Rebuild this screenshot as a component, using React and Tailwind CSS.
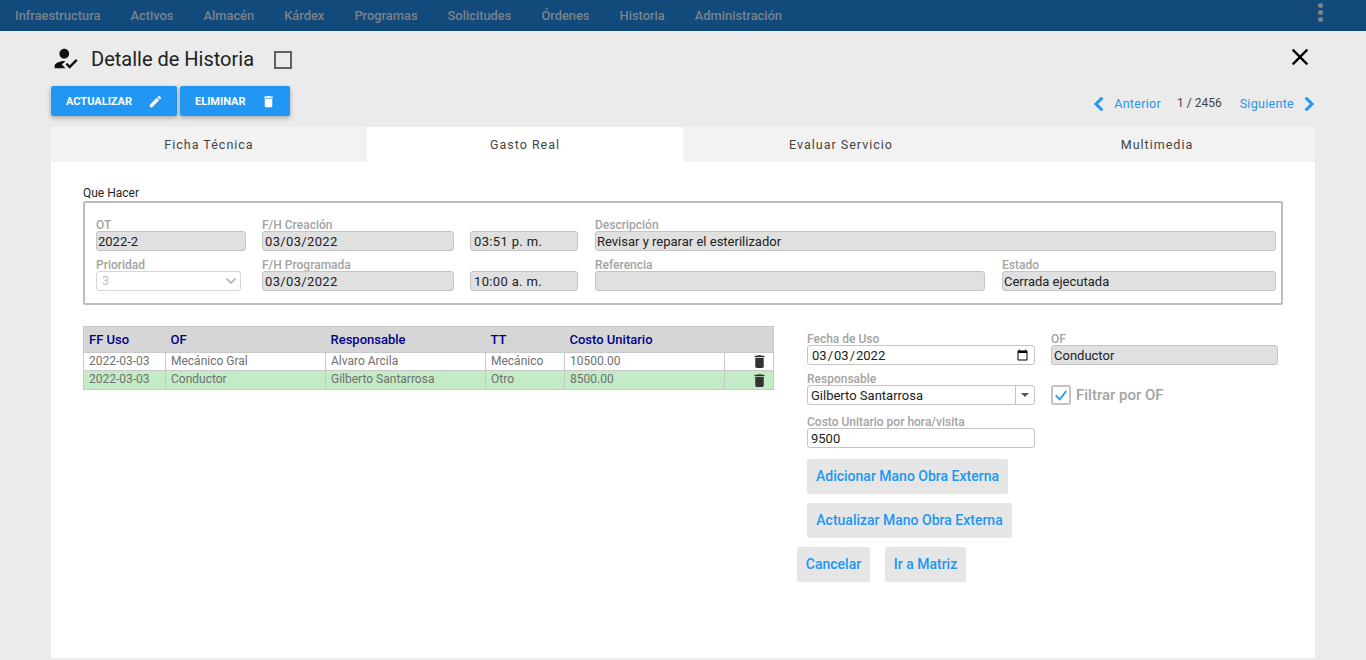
import React from "react";

const Icon = ({ d, className }) => (
  <svg viewBox="0 0 24 24" fill="currentColor" className={className}><path d={d} /></svg>
);
const TRASH = "M6 19c0 1.1.9 2 2 2h8c1.1 0 2-.9 2-2V7H6v12zM19 4h-3.5l-1-1h-5l-1 1H5v2h14V4z";
const EDIT = "M3 17.25V21h3.75L17.81 9.94l-3.75-3.75L3 17.25zM20.71 7.04c.39-.39.39-1.02 0-1.41l-2.34-2.34a.9959.9959 0 0 0-1.41 0l-1.83 1.83 3.75 3.75 1.83-1.83z";
const USER = "M9 17l3-2.94c-.39-.04-.68-.06-1-.06-2.67 0-8 1.34-8 4v2h9l-3-3zm2-5c2.21 0 4-1.79 4-4s-1.79-4-4-4-4 1.79-4 4 1.79 4 4 4m4.47 8.5L12 17l1.4-1.41 2.07 2.08 5.13-5.17 1.4 1.41z";
const CLOSE = "M19 6.41L17.59 5 12 10.59 6.41 5 5 6.41 10.59 12 5 17.59 6.41 19 12 13.41 17.59 19 19 17.59 13.41 12z";
const LEFT = "M15.41 7.41L14 6l-6 6 6 6 1.41-1.41L10.83 12z";
const RIGHT = "M10 6L8.59 7.41 13.17 12l-4.58 4.59L10 18l6-6z";

const nav = ["Infraestructura", "Activos", "Almacén", "Kárdex", "Programas", "Solicitudes", "Órdenes", "Historia", "Administración"];
const tabs = ["Ficha Técnica", "Gasto Real", "Evaluar Servicio", "Multimedia"];

const Field = ({ label, value, className = "", valueClass = "pl-[1px]" }) => (
  <div className={`flex flex-col ${className}`}>
    <span className="text-[12px] leading-[12px] font-medium text-[#a3a3a3] h-[12px]">{label}</span>
    <div className={`h-[20px] rounded-[3px] border border-[#c4c4c4] bg-[#e0e0e0] text-[13px] leading-[19px] text-[#222] whitespace-pre ${valueClass}`}>{value}</div>
  </div>
);

const rows = [
  { c: ["2022-03-03", "Mecánico Gral", "Alvaro Arcila", "Mecánico", "10500.00"], bg: "bg-white h-[18px]", text: "" },
  { c: ["2022-03-03", "Conductor", "Gilberto Santarrosa", "Otro", "8500.00"], bg: "bg-[#c3ebc6] h-[19px]", text: "pb-[1px]" },
];

const Light = ({ children, className = "" }) => (
  <button className={`h-[35px] rounded-[2px] bg-[#e6e6e6] text-[14px] font-medium text-[#2196f3] ${className}`}>{children}</button>
);

export default function App() {
  return (
    <div className="h-[660px] w-[1366px] overflow-hidden bg-[#ebebeb] font-['Roboto',sans-serif]">
      <nav className="flex h-[31px] items-center justify-between bg-[#124a7b] pl-[15px] pr-[43px]">
        <div className="flex gap-[30.1px] text-[12.85px] font-medium text-[#7d8288]">
          {nav.map((n) => <span key={n}>{n}</span>)}
        </div>
        <div className="mb-[7px] flex flex-col gap-[2px]">
          <i className="h-[5px] w-[5px] rounded-full bg-[#7d8288]" />
          <i className="h-[5px] w-[5px] rounded-full bg-[#7d8288]" />
          <i className="h-[5px] w-[5px] rounded-full bg-[#7d8288]" />
        </div>
      </nav>

      <main className="px-[51px]">
        <div className="flex h-[55px] items-center justify-between pt-[1px]">
          <div className="flex items-center">
            <Icon d={USER} className="mb-[2px] h-[29px] w-[29px] text-[#111]" />
            <span className="ml-[11px] text-[20px] text-[#222]">Detalle de Historia</span>
            <span className="ml-[20px] mt-[1px] h-[18px] w-[18px] border-2 border-[#616161]" />
          </div>
          <Icon d={CLOSE} className="mb-[4px] mr-[1px] h-[28px] w-[28px] text-black" />
        </div>

        <div className="flex h-[41px] items-start justify-between">
          <div className="flex gap-[3px]">
            <button className="flex h-[30px] w-[126px] items-center rounded-[2px] bg-[#2196f3] pl-[15px] pt-[2px] text-[11px] font-bold text-white shadow-[0_2px_5px_rgba(0,0,0,0.3)]">
              ACTUALIZAR
              <Icon d={EDIT} className="mb-[2px] ml-[16px] h-[15px] w-[15px]" />
            </button>
            <button className="flex h-[30px] w-[110px] items-center rounded-[2px] bg-[#2196f3] pl-[15px] pt-[2px] text-[11px] font-bold text-white shadow-[0_2px_5px_rgba(0,0,0,0.3)]">
              ELIMINAR
              <Icon d={TRASH} className="mb-[2px] ml-[15px] h-[15px] w-[15px]" />
            </button>
          </div>
          <div className="flex items-center pt-[4px] text-[12.5px] tracking-[0.3px] text-[#2196f3]">
            <Icon d={LEFT} className="mr-[-1px] h-[28px] w-[28px] stroke-current stroke-[0.6]" />
            <span className="ml-[2px]">Anterior</span>
            <span className="mb-[2px] ml-[16px] text-[12px] tracking-normal text-[#444]">1 / 2456</span>
            <span className="ml-[18px]">Siguiente</span>
            <Icon d={RIGHT} className="ml-[1px] mr-[-8px] h-[28px] w-[28px] stroke-current stroke-[0.6]" />
          </div>
        </div>

        <section className="h-[531px] rounded-t-[4px] bg-white">
          <div className="grid h-[35px] grid-cols-4">
            {tabs.map((t, i) => (
              <div key={t} className={`flex items-center justify-center pt-[1px] text-[12.5px] tracking-[1px] text-[#444] ${i === 1 ? "bg-white" : "bg-[#f2f2f2]"}`}>{t}</div>
            ))}
          </div>

          <div className="px-[32px] pt-[25px]">
            <div className="text-[12px] leading-[12px] text-[#222]">Que Hacer</div>
            <fieldset className="mt-[2px] h-[104px] w-[1200px] rounded-[2px] border-2 border-[#bdbdbd] pl-[11px] pr-[5px] pt-[16px]">
              <div className="flex">
                <Field label="OT" value="2022-2" className="w-[150px]" />
                <Field label="F/H Creación" value="03/03/2022" valueClass="pl-[2px] tracking-[0.35px]" className="ml-[16px] w-[192px]" />
                <Field label=" " value="03:51 p. m." valueClass="pl-[3px] tracking-[0.35px]" className="ml-[16px] w-[108px]" />
                <Field label="Descripción" value="Revisar y reparar el esterilizador" className="ml-[17px] w-[681px]" />
              </div>
              <div className="mt-[8px] flex">
                <div className="flex w-[150px] flex-col">
                  <span className="h-[12px] text-[12px] font-medium leading-[12px] text-[#a3a3a3]">Prioridad</span>
                  <div className="flex h-[20px] w-[145px] items-center justify-between rounded-[3px] border border-[#d6d6d6] bg-white pl-[5px] pr-[3px] text-[12.5px] text-[#c4c4c4]">
                    3
                    <svg viewBox="0 0 12 8" className="h-[8px] w-[12px]" fill="none" stroke="#b0b0b0" strokeWidth="1.6"><path d="M1.5 1.5 6 6l4.5-4.5" /></svg>
                  </div>
                </div>
                <Field label="F/H Programada" value="03/03/2022" valueClass="pl-[2px] tracking-[0.35px]" className="ml-[16px] w-[192px]" />
                <Field label=" " value="10:00 a. m." valueClass="pl-[3px] tracking-[0.35px]" className="ml-[16px] w-[108px]" />
                <Field label="Referencia" value="" className="ml-[17px] w-[390px]" />
                <Field label="Estado" value="Cerrada ejecutada" className="ml-[17px] w-[274px]" />
              </div>
            </fieldset>

            <div className="mt-[21px] flex">
              <table className="h-fit w-[691px] shrink-0 table-fixed border-collapse border border-[#c9c9c9] text-[12px]">
                <colgroup>
                  <col className="w-[82px]" /><col className="w-[160px]" /><col className="w-[160px]" /><col className="w-[79px]" /><col className="w-[160px]" /><col />
                </colgroup>
                <thead>
                  <tr className="h-[26px] bg-[#d6d6d6] text-left text-[13px] text-[#00008b]">
                    {["FF Uso", "OF", "Responsable", "TT", "Costo Unitario", ""].map((h, i) => (
                      <th key={i} className="px-[5px] font-medium">{h}</th>
                    ))}
                  </tr>
                </thead>
                <tbody>
                  {rows.map((r) => (
                    <tr key={r.c[1]} className={r.bg}>
                      {r.c.map((c, i) => (
                        <td key={i} className={`border border-[#c9c9c9] px-[5px] py-0 leading-[15px] text-[#707070] ${r.text}`}>{c}</td>
                      ))}
                      <td className="border border-[#c9c9c9] p-0 pl-[26px]">
                        <Icon d={TRASH} className="h-[17px] w-[17px] text-[#333]" />
                      </td>
                    </tr>
                  ))}
                </tbody>
              </table>

              <div className="ml-[33px] w-[476px] pt-[7px]">
                <div className="flex gap-[16px]">
                  <div className="flex w-[228px] flex-col">
                    <span className="h-[12px] text-[12px] font-medium leading-[12px] text-[#a3a3a3]">Fecha de Uso</span>
                    <input type="date" defaultValue="2022-03-03" className="h-[20px] rounded-[3px] border border-[#c4c4c4] bg-white px-[3px] pt-[1px] text-[13px] text-[#222]" />
                  </div>
                  <Field label="OF" value="Conductor" valueClass="pl-[2px]" className="w-[227px]" />
                </div>
                <div className="mt-[8px] flex h-[32px] gap-[16px]">
                  <div className="flex w-[228px] flex-col">
                    <span className="h-[12px] text-[12px] font-medium leading-[12px] text-[#a3a3a3]">Responsable</span>
                    <div className="flex h-[20px] items-center justify-between rounded-[3px] border border-[#c4c4c4] bg-white pl-[3px] text-[13px] text-[#222]">
                      <span className="pt-[1px]">Gilberto Santarrosa</span>
                      <span className="flex h-full w-[19px] items-center justify-center border-l border-[#c4c4c4]">
                        <i className="h-0 w-0 border-x-[4px] border-t-[4px] border-x-transparent border-t-[#555]" />
                      </span>
                    </div>
                  </div>
                  <div className="flex h-[32px] items-center pt-[12px]">
                    <span className="flex h-[20px] w-[20px] items-center justify-center rounded-[2px] border-2 border-[#c4c4c4] bg-white">
                      <svg viewBox="0 0 16 16" className="h-[14px] w-[14px]" fill="none" stroke="#2196f3" strokeWidth="2"><path d="M2 8.5 6.5 13 14 3.5" /></svg>
                    </span>
                    <span className="ml-[5px] text-[15px] font-medium text-[#a3a3a3]">Filtrar por OF</span>
                  </div>
                </div>
                <div className="mt-[11px] flex w-[228px] flex-col">
                  <span className="h-[12px] text-[12px] font-medium leading-[12px] text-[#a3a3a3]">Costo Unitario por hora/visita</span>
                  <div className="h-[20px] rounded-[3px] border border-[#c4c4c4] bg-white px-[3px] text-[13px] leading-[19px] text-[#222]">9500</div>
                </div>
                <div className="mt-[11px] flex flex-col items-start gap-[9px]">
                  <Light className="w-[201px]">Adicionar Mano Obra Externa</Light>
                  <Light className="w-[205px]">Actualizar Mano Obra Externa</Light>
                </div>
                <div className="ml-[-10px] mt-[9px] flex gap-[15px]">
                  <Light className="w-[73px]">Cancelar</Light>
                  <Light className="w-[81px]">Ir a Matriz</Light>
                </div>
              </div>
            </div>
          </div>
        </section>
      </main>
    </div>
  );
}
